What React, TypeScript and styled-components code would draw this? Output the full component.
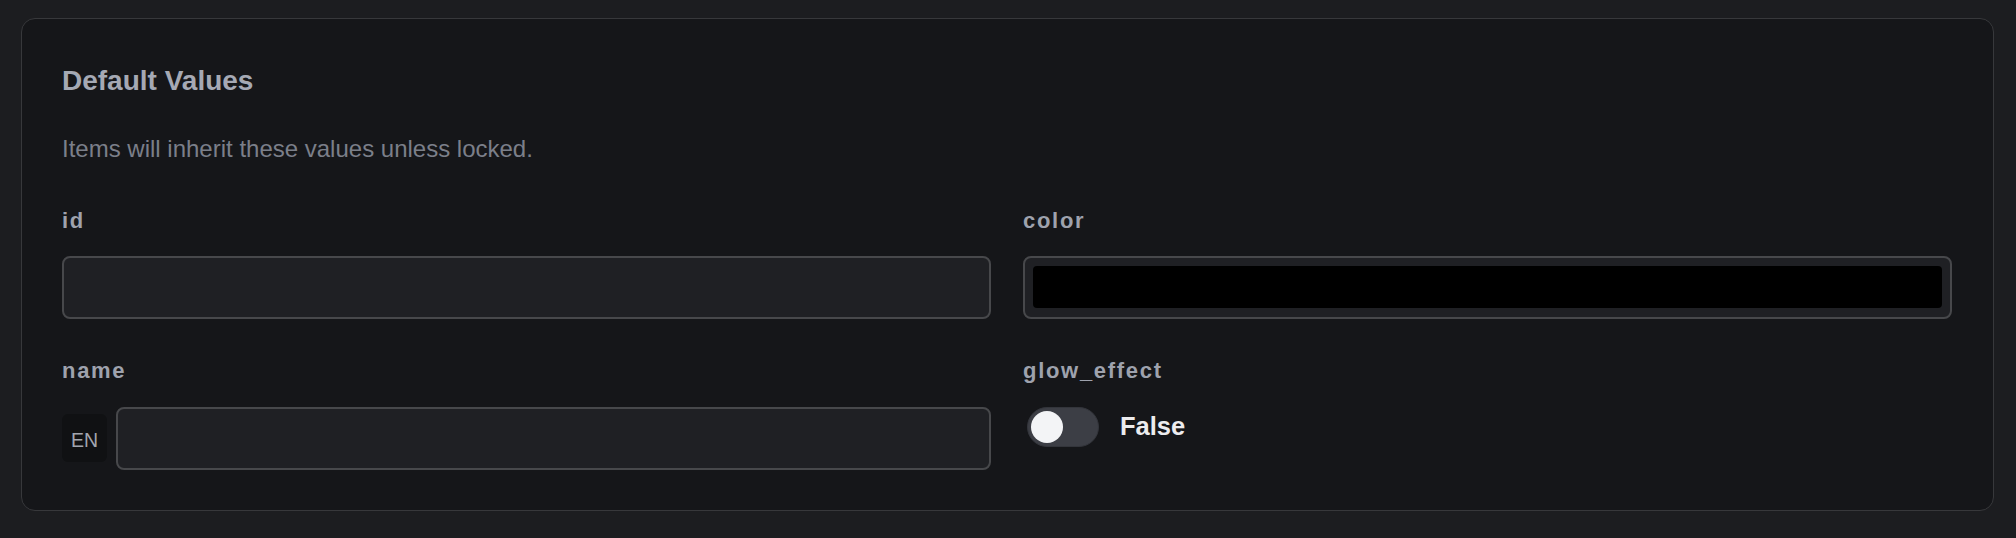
import React, { useState } from "react";
import styled, { createGlobalStyle } from "styled-components";

const GlobalStyle = createGlobalStyle`
  html, body {
    margin: 0;
    padding: 0;
    background: #1c1d20;
  }
  body {
    font-family: "Liberation Sans", Arial, sans-serif;
  }
  * {
    box-sizing: border-box;
  }
`;

type FieldDef = {
  key: string;
  kind: "text" | "color" | "localized" | "toggle";
};

const fields: FieldDef[] = [
  { key: "id", kind: "text" },
  { key: "color", kind: "color" },
  { key: "name", kind: "localized" },
  { key: "glow_effect", kind: "toggle" },
];

export default function App() {
  const [glow, setGlow] = useState(false);

  const renderControl = (f: FieldDef) => {
    switch (f.kind) {
      case "color":
        return (
          <ColorWell>
            <ColorSwatch $color="#000000" />
          </ColorWell>
        );
      case "localized":
        return (
          <LocaleRow>
            <LocaleTag>EN</LocaleTag>
            <TextInput />
          </LocaleRow>
        );
      case "toggle":
        return (
          <ToggleRow>
            <Switch $on={glow} onClick={() => setGlow((v) => !v)}>
              <Knob $on={glow} />
            </Switch>
            <ToggleText>{glow ? "True" : "False"}</ToggleText>
          </ToggleRow>
        );
      default:
        return <TextInput />;
    }
  };

  return (
    <>
      <GlobalStyle />
      <Page>
        <Card>
          <Title>Default Values</Title>
          <Description>Items will inherit these values unless locked.</Description>
          <FieldGrid>
            {fields.map((f) => (
              <Field key={f.key}>
                <FieldLabel>{f.key}</FieldLabel>
                {renderControl(f)}
              </Field>
            ))}
          </FieldGrid>
        </Card>
      </Page>
    </>
  );
}

/* ── Page + card ── */
const Page = styled.div`
  width: 2016px;
  height: 538px;
  padding: 18px 22px 0 21px;
`;

const Card = styled.section`
  width: 1973px;
  background: #151619;
  border: 1px solid #37383b;
  border-radius: 14px;
  padding: 40px 41px 40px 40px;
`;

const Title = styled.h2`
  margin: 0;
  font-size: 28px;
  line-height: 44px;
  font-weight: 700;
  color: #a5a9b4;
`;

const Description = styled.p`
  margin: 32px 0 0;
  font-size: 24px;
  line-height: 1.2;
  color: #7b7f89;
`;

/* ── Fields ── */
const FieldGrid = styled.div`
  display: grid;
  grid-template-columns: 1fr 1fr;
  column-gap: 32px;
  row-gap: 39px;
  margin-top: 44px;
`;

const Field = styled.div`
  display: flex;
  flex-direction: column;
  gap: 22px;
  min-width: 0;
`;

const FieldLabel = styled.label`
  font-size: 22px;
  line-height: 1.2;
  font-weight: 700;
  letter-spacing: 1.7px;
  color: #9ea2ad;
`;

const TextInput = styled.input`
  width: 100%;
  height: 63px;
  flex: 1;
  min-width: 0;
  background: #1f2024;
  border: 2px solid #47484b;
  border-radius: 8px;
  outline: none;
  padding: 0 16px;
  font-family: inherit;
  font-size: 22px;
  color: #e6e7ea;
`;

const ColorWell = styled.div`
  height: 63px;
  background: #1f2024;
  border: 2px solid #47484b;
  border-radius: 8px;
  padding: 8px 8px 9px 8px;
`;

const ColorSwatch = styled.div<{ $color: string }>`
  width: 100%;
  height: 100%;
  border-radius: 4px;
  background: ${({ $color }) => $color};
`;

const LocaleRow = styled.div`
  display: flex;
  align-items: center;
  gap: 9px;
`;

const LocaleTag = styled.span`
  display: flex;
  align-items: center;
  justify-content: center;
  width: 45px;
  height: 48px;
  padding-top: 4px;
  flex-shrink: 0;
  background: #101113;
  border-radius: 6px;
  font-size: 19.5px;
  color: #a2a6af;
`;

/* ── Toggle ── */
const ToggleRow = styled.div`
  display: flex;
  align-items: center;
  gap: 21px;
  padding-left: 4px;
`;

const Switch = styled.button<{ $on: boolean }>`
  position: relative;
  width: 72px;
  height: 40px;
  padding: 0;
  border: 1px solid #33353b;
  border-radius: 20px;
  background: ${({ $on }) => ($on ? "#3b82f6" : "#3c3e45")};
  cursor: pointer;
`;

const Knob = styled.span<{ $on: boolean }>`
  position: absolute;
  top: 3px;
  left: ${({ $on }) => ($on ? "35px" : "3px")};
  width: 32px;
  height: 32px;
  border-radius: 50%;
  background: #f3f4f6;
  transition: left 0.15s;
`;

const ToggleText = styled.span`
  font-size: 25.5px;
  font-weight: 700;
  color: #ececee;
`;
